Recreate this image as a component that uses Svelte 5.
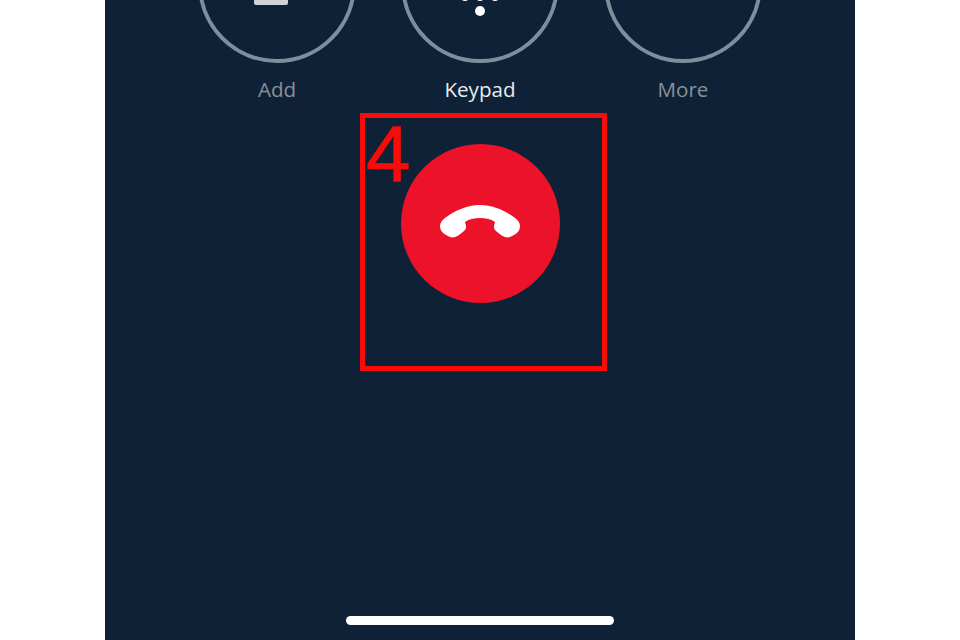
<script>
    const actions = [
        { label: 'Add', active: false, icon: 'add' },
        { label: 'Keypad', active: true, icon: 'keypad' },
        { label: 'More', active: false, icon: '' }
    ];
</script>

<div class="phone">
    <div class="actions">
        {#each actions as action}
            <div class="action">
                <div class="ring">
                    {#if action.icon === 'add'}
                        <span class="add-bar"></span>
                    {:else if action.icon === 'keypad'}
                        <svg class="dots" width="40" height="20" viewBox="0 0 40 20">
                            <circle cx="5" cy="-4" r="5" fill="#fff" />
                            <circle cx="20" cy="-4" r="5" fill="#fff" />
                            <circle cx="35" cy="-4" r="5" fill="#fff" />
                            <circle cx="20" cy="11" r="5" fill="#fff" />
                        </svg>
                    {/if}
                </div>
                <span class="label" class:active={action.active}>{action.label}</span>
            </div>
        {/each}
    </div>

    <div class="marked">
        <span class="number">4</span>
        <button class="hangup" aria-label="End call">
            <svg class="handset" width="82" height="34" viewBox="0 0 82 34">
                <path
                    d="M1 21C1 18 3 15 6 13C15 6 28 0 41 0S67 6 76 13C79 15 81 18 81 21C81 25 79 28 75 30L71 32C68 33 65 32 62 30L57 26C55 24.5 55 23 55 21L56 17C52 14 47 13 41 13S30 14 26 17L27 21C27 23 27 24.5 25 26L20 30C17 32 14 33 11 32L7 30C3 28 1 25 1 21Z"
                    fill="#fff"
                />
            </svg>
        </button>
    </div>

    <div class="home-bar"></div>
</div>

<style>
    :global(body) {
        margin: 0;
        background: #fff;
    }

    .phone {
        position: relative;
        width: 750px;
        height: 640px;
        margin: 0 auto;
        background: #0f2137;
        overflow: hidden;
        font-family: 'Open Sans', 'Noto Sans', sans-serif;
    }

    .actions {
        display: flex;
        justify-content: center;
        gap: 45px;
        margin-top: -95px;
    }

    .action {
        display: flex;
        flex-direction: column;
        align-items: center;
        gap: 13px;
    }

    .ring {
        position: relative;
        width: 158px;
        height: 158px;
        box-sizing: border-box;
        border: 4px solid #7f8e9c;
        border-radius: 50%;
    }

    .add-bar {
        position: absolute;
        left: 52px;
        top: 84px;
        width: 34px;
        height: 12px;
        background: #cfd3d8;
        border-radius: 0 0 2px 2px;
    }

    .dots {
        position: absolute;
        left: 55px;
        top: 91px;
    }

    .label {
        font-size: 20.6px;
        line-height: 27px;
        color: #8b9095;
    }

    .label.active {
        color: #e8ecef;
    }

    .marked {
        position: relative;
        box-sizing: border-box;
        width: 247px;
        height: 258px;
        margin: 10px 0 0 255px;
        border: 5px solid #fb0a0a;
    }

    .number {
        position: absolute;
        left: 1px;
        top: -4px;
        font-family: 'Liberation Sans', sans-serif;
        font-size: 80px;
        line-height: 80px;
        color: #fb0a0a;
        -webkit-text-stroke: 0.7px #fb0a0a;
    }

    .hangup {
        position: absolute;
        left: 36px;
        top: 26px;
        display: flex;
        align-items: center;
        justify-content: center;
        width: 159px;
        height: 159px;
        padding: 0;
        border: 0;
        border-radius: 50%;
        background: #ec1229;
    }

    .handset {
        margin: 0 2px 3px 0;
    }

    .home-bar {
        position: absolute;
        left: 241px;
        bottom: 15px;
        width: 268px;
        height: 9px;
        border-radius: 5px;
        background: #fff;
    }
</style>
